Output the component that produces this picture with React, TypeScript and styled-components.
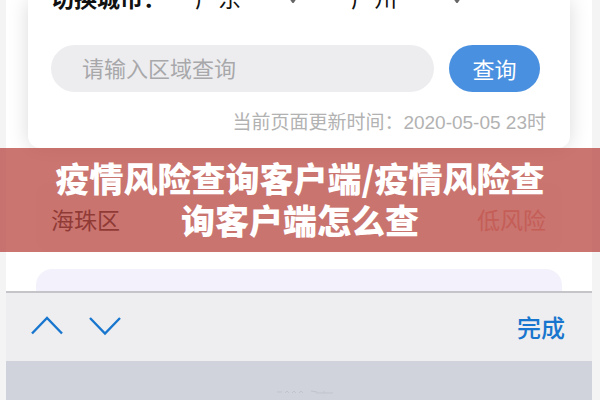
import React from "react";
import styled, { createGlobalStyle } from "styled-components";

const Global = createGlobalStyle`
  * { box-sizing: border-box; }
  body { margin: 0; background: #f4f4f5; }
  body, button, input, select { font-family: "Liberation Sans", "Noto Sans CJK SC", sans-serif; }
`;
const Page = styled.div`
  position: relative;
  height: 100vh;
  overflow: hidden;
  padding: 0 8px 0 6px;
`;
const Phone = styled.main`
  height: 100%;
  display: flex;
  flex-direction: column;
  background: #fff;
`;
const Results = styled.section`
  height: 291px;
  flex: none;
  overflow: hidden;
  padding: 0 22px;
`;
const Card = styled.form`
  height: 148px;
  border-radius: 0 0 12px 12px;
  background: #fff;
  box-shadow: 0 0 20px rgba(0, 0, 0, 0.15);
  padding: 0 24px 0 23px;
  display: flex;
  flex-direction: column;
`;
const CityRow = styled.div`
  height: 15px;
  display: flex;
  align-items: flex-end;
  font-size: 23px;
  line-height: 32px;
  color: #111;
`;
const CityLabel = styled.label`
  width: 144px;
  font-weight: 700;
`;
const Picker = styled.div`
  display: flex;
  align-items: flex-end;
  margin-right: 52px;
`;
const CitySelect = styled.select<{ $width: number }>`
  appearance: none;
  border: 0;
  padding: 0;
  width: ${(p) => p.$width}px;
  height: 32px;
  background: transparent;
  color: #111;
  font-size: 23px;
  line-height: 32px;
`;
const Arrow = styled.svg`
  width: 12px;
  height: 8px;
  margin-bottom: 12px;
`;
const SearchRow = styled.div`
  display: flex;
  gap: 15px;
  margin-top: 30px;
  padding-right: 6px;
`;
const SearchInput = styled.input`
  flex: 1;
  min-width: 0;
  height: 47px;
  border: 0;
  border-radius: 24px;
  padding: 2px 31px 0;
  background: #ededf0;
  font-size: 22px;
  &::placeholder { color: #a8a8aa; opacity: 1; }
`;
const SearchButton = styled.button`
  width: 91px;
  height: 47px;
  border: 0;
  border-radius: 24px;
  padding: 0 0 2px;
  background: #4a90e0;
  color: #fff;
  font-size: 22px;
`;
const Updated = styled.p`
  margin: 17px 0 0;
  text-align: right;
  white-space: nowrap;
  font-size: 19px;
  line-height: 28px;
  color: #b2b2b2;
`;
const Area = styled.div`
  display: flex;
  justify-content: space-between;
  align-items: center;
  height: 68px;
  margin: 35px 8px 0;
  padding: 4px 16px 0 15px;
  border-radius: 12px;
  background: #fbf9fb;
  font-size: 23px;
  color: #151515;
`;
const Risk = styled.span`
  color: #e5a39d;
`;
const NextArea = styled.div`
  height: 40px;
  margin: 18px 8px 0;
  border-radius: 16px;
  background: #f3f2fc;
`;
const Toolbar = styled.div`
  flex: none;
  height: 70px;
  border-top: 2px solid #c5c5c9;
  background: #eeeef0;
  display: flex;
  align-items: center;
  gap: 24px;
  padding: 0 27px 2px 24px;
`;
const ToolButton = styled.button`
  display: flex;
  border: 0;
  padding: 0;
  background: transparent;
  color: #1976ce;
  font-size: 24px;
  font-weight: 500;
`;
const Done = styled(ToolButton)`
  margin-left: auto;
`;
const Wheel = styled.div`
  flex: 1;
  display: flex;
  justify-content: center;
  align-items: flex-end;
  padding: 0 0 5px 12px;
  background: #d0d2dc;
`;
const Banner = styled.div`
  position: absolute;
  left: 0;
  right: 0;
  top: 148px;
  padding: 9px 50px 11px;
  background: rgba(184, 71, 64, 0.75);
`;
const Title = styled.h1`
  margin: 0;
  text-align: center;
  color: #fff;
  font-family: "Noto Sans CJK SC", sans-serif;
  font-size: 34px;
  font-weight: 900;
  line-height: 42px;
`;

function City({ id, name, width }: { id: string; name: string; width: number }) {
  return (
    <Picker>
      <CitySelect id={id} aria-label={name} $width={width}>
        <option>{name}</option>
      </CitySelect>
      <Arrow viewBox="0 0 12 8" aria-hidden="true">
        <path d="M0 0h12L7 7.5Q6 8.5 5 7.5z" fill="#666" />
      </Arrow>
    </Picker>
  );
}

export default function App() {
  return (
    <Page>
      <Global />
      <Phone>
        <Results>
          <Card onSubmit={(e) => e.preventDefault()}>
            <CityRow>
              <CityLabel htmlFor="province">切换城市：</CityLabel>
              <City id="province" name="广东" width={92} />
              <City id="city" name="广州" width={100} />
            </CityRow>
            <SearchRow>
              <SearchInput aria-label="区域" placeholder="请输入区域查询" />
              <SearchButton type="submit">查询</SearchButton>
            </SearchRow>
            <Updated>当前页面更新时间：2020-05-05 23时</Updated>
          </Card>
          <Area>
            <span>海珠区</span>
            <Risk>低风险</Risk>
          </Area>
          <NextArea />
        </Results>
        <Toolbar>
          <ToolButton type="button" aria-label="上一项">
            <svg width="34" height="20" viewBox="0 0 34 20" fill="none" stroke="currentColor" strokeWidth="2.4">
              <path d="M2 17.5 17 2l15 15.5" />
            </svg>
          </ToolButton>
          <ToolButton type="button" aria-label="下一项">
            <svg width="34" height="20" viewBox="0 0 34 20" fill="none" stroke="currentColor" strokeWidth="2.4">
              <path d="M2 2l15 15.5L32 2" />
            </svg>
          </ToolButton>
          <Done type="button">完成</Done>
        </Toolbar>
        <Wheel>
          <svg width="58" height="5" viewBox="0 0 58 5" fill="none" stroke="#c2c4cd" aria-hidden="true">
            <path d="M1 2h5M9 3l2-2 2 2M16 3l2-2 2 2M23 3l2-2 2 2M35 1l6 1M40 3h17M48 1v2" />
          </svg>
        </Wheel>
      </Phone>
      <Banner>
        <Title>疫情风险查询客户端/疫情风险查询客户端怎么查</Title>
      </Banner>
    </Page>
  );
}
